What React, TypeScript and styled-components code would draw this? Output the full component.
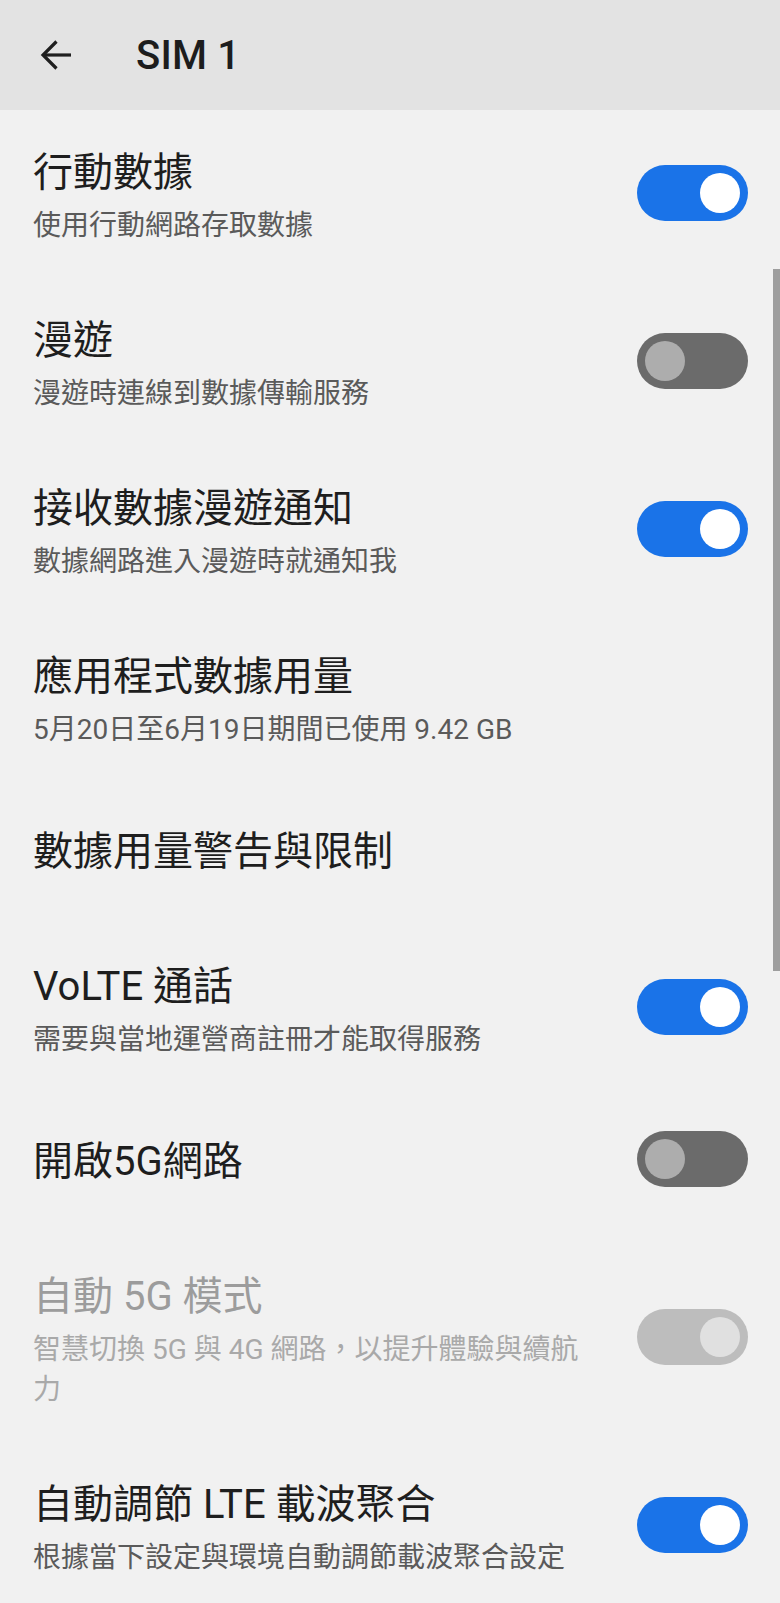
import React, { FC } from "react";
import styled, { createGlobalStyle } from "styled-components";

const GlobalStyle = createGlobalStyle`
  html, body {
    margin: 0;
    padding: 0;
    background: #f1f1f1;
  }
  body {
    font-family: Roboto, "Noto Sans CJK TC", sans-serif;
  }
`;

const Screen = styled.div`
  position: relative;
  width: 780px;
  height: 1603px;
  overflow: hidden;
  background: #f1f1f1;
`;

const Header = styled.header`
  display: flex;
  align-items: center;
  height: 110px;
  padding-left: 32px;
  background: #e3e3e3;
  box-sizing: border-box;
`;

const BackButton = styled.button`
  all: unset;
  display: flex;
  align-items: center;
  justify-content: center;
  width: 48px;
  height: 48px;
  cursor: pointer;
`;

const HeaderTitle = styled.h1`
  margin: 0 0 0 56px;
  font-size: 40px;
  font-weight: 500;
  color: #1d1d1d;
  letter-spacing: 0.2px;
`;

const List = styled.div`
  display: flex;
  flex-direction: column;
`;

const Row = styled.div<{ $single?: boolean }>`
  display: flex;
  align-items: center;
  min-height: 142px;
  padding: ${(p) => (p.$single ? "33px 32px 35px 33px" : "36px 32px 32px 33px")};
  box-sizing: border-box;
`;

const Texts = styled.div`
  flex: 1;
  display: flex;
  flex-direction: column;
  justify-content: center;
  min-width: 0;
  padding-right: 40px;
`;

const Title = styled.div<{ $disabled?: boolean }>`
  font-size: 40px;
  line-height: 54px;
  color: ${(p) => (p.$disabled ? "#9c9c9c" : "#1e1e1e")};
`;

const Summary = styled.div<{ $disabled?: boolean }>`
  margin-top: 6px;
  font-size: 28px;
  line-height: 40px;
  color: ${(p) => (p.$disabled ? "#a9a9a9" : "#5a5a5a")};
`;

const Track = styled.div<{ $on: boolean; $disabled?: boolean }>`
  display: flex;
  align-items: center;
  justify-content: ${(p) => (p.$on ? "flex-end" : "flex-start")};
  flex-shrink: 0;
  width: 111px;
  height: 56px;
  margin-top: -6px;
  padding: 0 8px;
  box-sizing: border-box;
  border-radius: 28px;
  background: ${(p) =>
    p.$disabled ? "#bdbdbd" : p.$on ? "#1a73e8" : "#6b6b6b"};
`;

const Knob = styled.div<{ $on: boolean; $disabled?: boolean }>`
  width: 40px;
  height: 40px;
  border-radius: 50%;
  background: ${(p) =>
    p.$disabled ? "#e0e0e0" : p.$on ? "#ffffff" : "#adadad"};
`;

const Scrollbar = styled.div`
  position: absolute;
  right: 0;
  top: 269px;
  width: 7px;
  height: 702px;
  background: #9e9e9e;
`;

interface Setting {
  title: string;
  summary?: string;
  toggle?: boolean;
  disabled?: boolean;
}

const settings: Setting[] = [
  { title: "行動數據", summary: "使用行動網路存取數據", toggle: true },
  { title: "漫遊", summary: "漫遊時連線到數據傳輸服務", toggle: false },
  { title: "接收數據漫遊通知", summary: "數據網路進入漫遊時就通知我", toggle: true },
  { title: "應用程式數據用量", summary: "5月20日至6月19日期間已使用 9.42 GB" },
  { title: "數據用量警告與限制" },
  { title: "VoLTE 通話", summary: "需要與當地運營商註冊才能取得服務", toggle: true },
  { title: "開啟5G網路", toggle: false },
  {
    title: "自動 5G 模式",
    summary: "智慧切換 5G 與 4G 網路，以提升體驗與續航力",
    toggle: true,
    disabled: true,
  },
  {
    title: "自動調節 LTE 載波聚合",
    summary: "根據當下設定與環境自動調節載波聚合設定",
    toggle: true,
  },
];

const Switch: FC<{ on: boolean; disabled?: boolean }> = ({ on, disabled }) => (
  <Track $on={on} $disabled={disabled}>
    <Knob $on={on} $disabled={disabled} />
  </Track>
);

const SettingRow: FC<{ setting: Setting }> = ({ setting }) => (
  <Row $single={!setting.summary}>
    <Texts>
      <Title $disabled={setting.disabled}>{setting.title}</Title>
      {setting.summary && (
        <Summary $disabled={setting.disabled}>{setting.summary}</Summary>
      )}
    </Texts>
    {setting.toggle !== undefined && (
      <Switch on={setting.toggle} disabled={setting.disabled} />
    )}
  </Row>
);

const BackArrow = () => (
  <svg width="32" height="32" viewBox="0 0 32 32" fill="none">
    <path d="M31 16H3" stroke="#1f1f1f" strokeWidth="3.2" />
    <path d="M16.5 2.5L3 16l13.5 13.5" stroke="#1f1f1f" strokeWidth="3.2" />
  </svg>
);

export default function App() {
  return (
    <Screen>
      <GlobalStyle />
      <Header>
        <BackButton aria-label="back">
          <BackArrow />
        </BackButton>
        <HeaderTitle>SIM 1</HeaderTitle>
      </Header>
      <List>
        {settings.map((s) => (
          <SettingRow key={s.title} setting={s} />
        ))}
      </List>
      <Scrollbar />
    </Screen>
  );
}
